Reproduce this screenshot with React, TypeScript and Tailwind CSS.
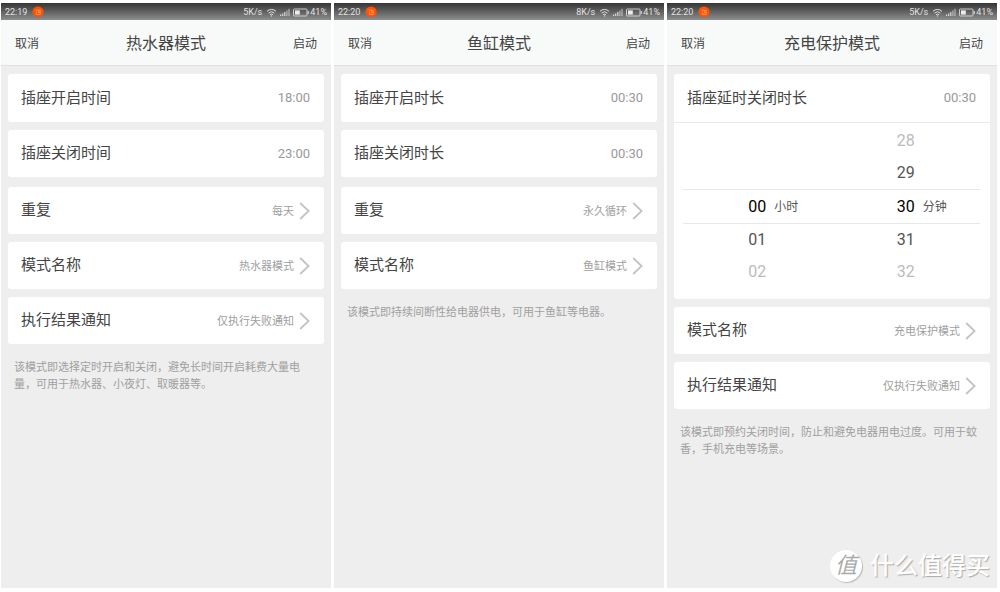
import { useState } from "react";
import type { ReactNode } from "react";

function StatusBar({ time, speed }: { time: string; speed: string }) {
  return (
    <div className="flex h-[17px] items-center justify-between bg-gradient-to-b from-[#363636] to-[#8e8e8e] px-1 pt-px text-[9px] leading-none text-[#e2e2e2]">
      <div className="flex items-center gap-1">
        <span>{time}</span>
        <svg className="ml-px size-3" viewBox="0 0 12 12" aria-hidden="true">
          <circle cx="6" cy="6" r="5.6" fill="#f4560c" />
          <path d="M3.6 4.2h4.6v4.2H4.4V5.6M6.4 4.2v2.2h1.8" fill="none" stroke="#ff9a62" strokeWidth="0.8" />
        </svg>
      </div>
      <div className="flex items-center">
        <span>{speed}</span>
        <svg className="ml-1 h-[9px] w-[11px]" viewBox="0 0 11 9" fill="none" stroke="#e2e2e2" aria-hidden="true">
          <path d="M1 3.3a6.4 6.4 0 0 1 9 0M2.6 5.1a4.1 4.1 0 0 1 5.8 0M4.1 6.7a2 2 0 0 1 2.8 0" strokeWidth="1" />
          <circle cx="5.5" cy="7.9" r="0.7" fill="#e2e2e2" stroke="none" />
        </svg>
        <svg className="ml-[3px] h-[9px] w-[10px]" viewBox="0 0 10 9" fill="#d8d8d8" aria-hidden="true">
          <path d="M0 6.5h1.2V8H0zM2.1 5.5h1.2V8H2.1zM4.2 4h1.2v4H4.2z" />
          <path d="M6.3 2.4h1.2V8H6.3zM8.4 .8h1.2V8H8.4z" opacity="0.7" />
        </svg>
        <svg className="ml-[3px] h-[9px] w-4" viewBox="0 0 16 9" aria-hidden="true">
          <rect x="0.5" y="1" width="13.5" height="7" rx="0.8" fill="none" stroke="#d8d8d8" strokeWidth="0.9" />
          <rect x="2" y="2.4" width="4.8" height="4.2" fill="#ececec" />
          <rect x="14.6" y="3" width="1.2" height="3" fill="#d8d8d8" />
        </svg>
        <span className="ml-px">41%</span>
      </div>
    </div>
  );
}

function Chevron() {
  return (
    <svg className="ml-[5px] h-[18px] w-[11px]" viewBox="0 0 11 18" fill="none" aria-hidden="true">
      <path d="M1.2 1 9.6 9 1.2 17" stroke="#c3c3c3" strokeWidth="1.8" />
    </svg>
  );
}

function TimeCard({ label, value, tall }: { label: string; value: string; tall?: boolean }) {
  return (
    <button
      type="button"
      className={`flex w-full items-center justify-between rounded-[3px] bg-white pr-[14px] pl-[13px] text-left ${tall ? "h-12" : "h-[47px]"}`}
    >
      <span className="text-[15px] text-[#444]">{label}</span>
      <span className="text-[13px] text-[#999]">{value}</span>
    </button>
  );
}

function OptionCard({ label, value }: { label: string; value: string }) {
  return (
    <button
      type="button"
      className="flex h-[47px] w-full items-center rounded-[3px] bg-white pr-[14px] pl-[13px] text-left"
    >
      <span className="flex-1 text-[15px] text-[#444]">{label}</span>
      <span className="pt-[3px] text-[11px] text-[#a0a0a0]">{value}</span>
      <Chevron />
    </button>
  );
}

const pad = (n: number) => String(n).padStart(2, "0");

function Wheel({ name, unit, initial, max }: { name: string; unit: string; initial: number; max: number }) {
  const [selected, setSelected] = useState(initial);
  const tones: Record<number, string> = {
    [-2]: "text-[#bbb]",
    [-1]: "text-[#555]",
    0: "border-y border-[#e8e8e8] text-black",
    1: "text-[#555]",
    2: "text-[#bbb]",
  };
  return (
    <ul aria-label={name} className="flex-1">
      {[-2, -1, 0, 1, 2].map((offset) => {
        const n = selected + offset;
        return (
          <li
            key={offset}
            className={`grid grid-cols-[1fr_auto_1fr] items-center ${offset === 0 ? "h-[35px]" : "h-8"} ${tones[offset]}`}
          >
            {n >= 0 && n <= max && (
              <button type="button" className="col-start-2 text-base" onClick={() => setSelected(n)}>
                {pad(n)}
              </button>
            )}
            {offset === 0 && <span className="ml-2 text-xs text-[#555]">{unit}</span>}
          </li>
        );
      })}
    </ul>
  );
}

function Phone(props: { time: string; speed: string; title: string; note: string; children: ReactNode }) {
  return (
    <section className="flex min-w-0 flex-col bg-[#eee]">
      <StatusBar time={props.time} speed={props.speed} />
      <header className="grid h-[46px] grid-cols-[1fr_auto_1fr] items-center border-b border-[#e0e0e0] bg-[#f8faf9] px-[14px] pt-0.5 text-[#444]">
        <button type="button" className="justify-self-start text-xs">取消</button>
        <h1 className="text-base">{props.title}</h1>
        <button type="button" className="justify-self-end text-xs">启动</button>
      </header>
      <main className="px-[7px] pt-2">
        <div className="flex flex-col gap-[10px]">{props.children}</div>
        <p className="mt-[15px] px-1.5 text-[11px] leading-[17px] text-[#a0a0a0]">{props.note}</p>
      </main>
    </section>
  );
}

function Group({ children }: { children: ReactNode }) {
  return <div className="flex flex-col gap-2">{children}</div>;
}

export default function App() {
  return (
    <div
      lang="zh-CN"
      className="relative grid min-h-screen grid-cols-3 gap-[3px] bg-white pt-[3px] pr-[3px] pb-1 pl-px font-[Roboto,'Noto_Sans_CJK_SC',sans-serif]"
    >
      <Phone
        time="22:19"
        speed="5K/s"
        title="热水器模式"
        note="该模式即选择定时开启和关闭，避免长时间开启耗费大量电量，可用于热水器、小夜灯、取暖器等。"
      >
        <Group>
          <TimeCard label="插座开启时间" value="18:00" tall />
          <TimeCard label="插座关闭时间" value="23:00" />
        </Group>
        <Group>
          <OptionCard label="重复" value="每天" />
          <OptionCard label="模式名称" value="热水器模式" />
          <OptionCard label="执行结果通知" value="仅执行失败通知" />
        </Group>
      </Phone>

      <Phone
        time="22:20"
        speed="8K/s"
        title="鱼缸模式"
        note="该模式即持续间断性给电器供电，可用于鱼缸等电器。"
      >
        <Group>
          <TimeCard label="插座开启时长" value="00:30" tall />
          <TimeCard label="插座关闭时长" value="00:30" />
        </Group>
        <Group>
          <OptionCard label="重复" value="永久循环" />
          <OptionCard label="模式名称" value="鱼缸模式" />
        </Group>
      </Phone>

      <Phone
        time="22:20"
        speed="5K/s"
        title="充电保护模式"
        note="该模式即预约关闭时间，防止和避免电器用电过度。可用于蚊香，手机充电等场景。"
      >
        <Group>
          <div className="rounded-[3px] bg-white">
            <TimeCard label="插座延时关闭时长" value="00:30" tall />
            <div className="border-t border-[#e8e8e8] pt-0.5 pr-[10px] pb-[11px] pl-[9px]">
              <div className="flex">
                <Wheel name="小时" unit="小时" initial={0} max={23} />
                <Wheel name="分钟" unit="分钟" initial={30} max={59} />
              </div>
            </div>
          </div>
          <OptionCard label="模式名称" value="充电保护模式" />
          <OptionCard label="执行结果通知" value="仅执行失败通知" />
        </Group>
      </Phone>

      <div className="pointer-events-none absolute right-[10px] bottom-[10px] flex items-center gap-2 text-white">
        <span className="flex size-8 items-center justify-center rounded-full bg-white text-[22px] leading-none text-[#aaa] italic shadow-[1px_1px_1px_#bbb]">
          值
        </span>
        <span className="text-2xl font-medium [text-shadow:1px_1px_1px_#aaa]">什么值得买</span>
      </div>
    </div>
  );
}
